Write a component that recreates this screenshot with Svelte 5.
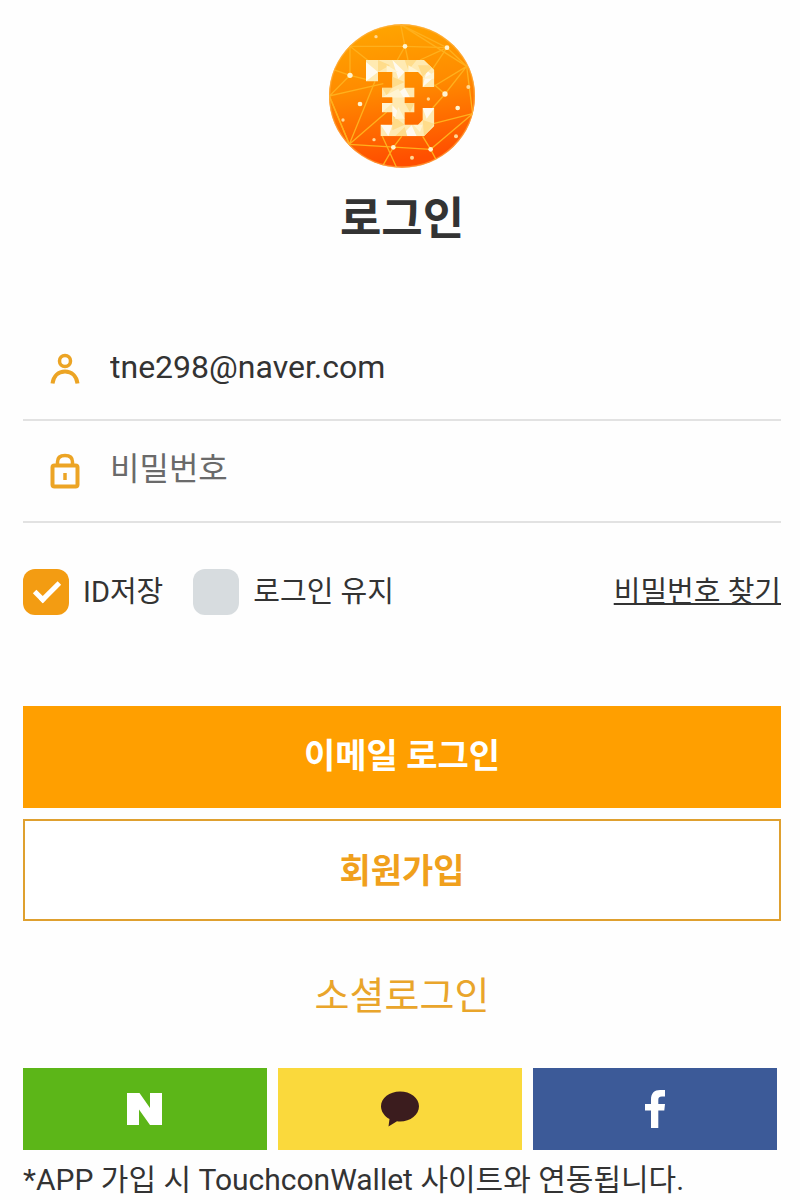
<script>
	let userId = "tne298@naver.com";
	let password = "";
	let saveId = true;
	let keepLogin = false;

	async function handleLogin() {
		const result = await fetch('/account/sign-in', {
			method: 'POST',
			headers: {
				'Content-Type': 'application/json',
			},
			body: JSON.stringify({
				user_id: userId,
				password,
				keep_login: keepLogin,
			}),
		})

		if (result.ok) {
			if (saveId) localStorage.setItem('userId', userId);
			window.location.href = '/';
		}
	}

	function handleSignUp() {
		window.location.href = '/sign-up';
	}

	function handleSocial(provider) {
		window.location.href = `/oauth/${provider}`;
	}
</script>

<main class="page">
	<header>
		<svg class="logo" viewBox="27 27 438 430" aria-hidden="true">
			<defs>
				<linearGradient id="coin" x1="0" y1="0" x2="0.15" y2="1">
					<stop offset="0" stop-color="#ffa800" />
					<stop offset="0.5" stop-color="#ff8a00" />
					<stop offset="1" stop-color="#ff4f00" />
				</linearGradient>
				<clipPath id="coinClip">
					<ellipse cx="246" cy="242" rx="219" ry="215" />
				</clipPath>
				<clipPath id="markClip">
					<path d="M138 134H312L343 164V215H308V184L294 170H254V217H283V246H254V263H283V291H254V328H294L308 314V278H343V332L312 363H182V328H217V291H186V263H217V246H186V217H217V170H174V198H138Z" />
				</clipPath>
			</defs>
			<ellipse cx="246" cy="242" rx="219" ry="215" fill="url(#coin)" />
			<g clip-path="url(#coinClip)" fill="none" stroke="#ffb01c" stroke-width="4">
				<path d="M90 93H255L381 97L440 153L458 295L332 402L88 387L28 242" />
				<path d="M90 93L150 140M90 93V180L28 242L190 205M40 163L90 180L138 192" />
				<path d="M242 28L255 93L232 134M255 93L264 134M242 28L381 97L300 134M242 28L440 153" />
				<path d="M381 97L335 165M440 153L343 212M440 153L375 236L343 208M375 236L338 278M458 295L340 325" />
				<path d="M165 198L88 387L200 290M28 242L88 387" />
				<path d="M187 363L230 457M245 363L220 396L185 457M308 363L332 402L352 440" />
			</g>
			<ellipse cx="246" cy="242" rx="217" ry="213" fill="none" stroke="#ffb347" stroke-width="4" opacity="0.6" />
			<g clip-path="url(#markClip)">
				<path d="M130 130H350V370H130Z" fill="#ffeab2" />
				<path d="M138 140L174 170L138 198ZM217 134L254 170L235 190ZM182 328L217 330L205 363ZM254 217L270 246L217 246ZM217 270L245 300L217 320ZM260 345L275 330L290 363H250ZM308 278L343 278L320 310ZM320 165L343 184L308 215Z" fill="#fffaf0" />
				<path d="M174 134L210 150L174 170ZM254 134L290 134L265 165ZM294 150L343 150L308 184ZM217 184L254 200L217 217ZM186 217L217 217L200 240ZM254 263L283 263L270 291ZM217 300L254 328L217 345ZM308 314L343 325L312 363ZM225 363L254 335L262 363Z" fill="#ffdc8a" />
				<path d="M200 150L235 170H200ZM265 150L300 170H265ZM186 246L235 220L250 246ZM186 263L217 263L186 291ZM235 275L254 310L225 310ZM280 328L308 328L300 350ZM308 190L343 170V190Z" fill="#fff4d2" />
			</g>
			<g fill="#fff4d0">
				<circle cx="255" cy="93" r="7" />
				<circle cx="381" cy="97" r="7" />
				<circle cx="90" cy="180" r="8" />
				<circle cx="375" cy="236" r="8" />
				<circle cx="120" cy="266" r="7" />
				<circle cx="413" cy="278" r="7" />
				<circle cx="220" cy="396" r="7" />
				<circle cx="332" cy="402" r="7" />
			</g>
			<g fill="#ffd894">
				<circle cx="168" cy="64" r="5" />
				<circle cx="445" cy="215" r="6" />
				<circle cx="325" cy="251" r="5" />
				<circle cx="69" cy="314" r="5" />
				<circle cx="162" cy="373" r="5" />
				<circle cx="408" cy="363" r="6" />
				<circle cx="276" cy="427" r="6" />
			</g>
		</svg>
		<h1>로그인</h1>
	</header>

	<form on:submit|preventDefault={handleLogin}>
		<div class="field">
			<label for="userId" aria-label="ID">
				<svg width="30" height="36" viewBox="0 0 30 36" fill="none" stroke="#eca424" stroke-width="4">
					<circle cx="15" cy="10" r="5.5" stroke-width="3.5" />
					<path d="M2.500 32.500C3.500 25 8.500 20.500 15 20.500S26.500 25 27.500 32.500" />
				</svg>
			</label>
			<input type="text" id="userId" bind:value={userId} />
		</div>
		<div class="field">
			<label for="password" aria-label="비밀번호">
				<svg width="30" height="36" viewBox="0 0 30 36" fill="none" stroke="#eca424" stroke-width="4">
					<rect x="2.500" y="12.500" width="25" height="21" rx="2" />
					<path d="M7.500 12V9C7.500 4.500 10.500 2.500 15 2.500S22.500 4.500 22.500 9V12" stroke-width="3.5" />
					<path d="M15 20V27" stroke-width="3.5" />
				</svg>
			</label>
			<input type="password" id="password" placeholder="비밀번호" bind:value={password} />
		</div>

		<div class="options">
			<label class="check"><input type="checkbox" bind:checked={saveId} />ID저장</label>
			<label class="check"><input type="checkbox" bind:checked={keepLogin} />로그인 유지</label>
			<a href="/find-password">비밀번호 찾기</a>
		</div>

		<div class="buttons">
			<button type="submit" class="login-button">이메일 로그인</button>
			<button type="button" class="signup-button" on:click={handleSignUp}>회원가입</button>
		</div>
	</form>

	<h2>소셜로그인</h2>
	<div class="social">
		<button type="button" class="naver" aria-label="Naver" on:click={() => handleSocial('naver')}>
			<svg width="36" height="32" viewBox="0 0 36 32">
				<path d="M0 0H12.500L23 15V0H35V32H23L12 16.500V32H0Z" fill="#fff" />
			</svg>
		</button>
		<button type="button" class="kakao" aria-label="Kakao" on:click={() => handleSocial('kakao')}>
			<svg width="38" height="36" viewBox="0 0 38 36">
				<path d="M19 0.500C8.500 0.500 0 7 0 15.300C0 20.500 3.500 25.500 8.500 28L7.500 35.500L16 30.200C17 30.400 18 30.500 19 30.500C29.500 30.500 38 23.800 38 15.300S29.500 0.500 19 0.500Z" fill="#3b1c1e" />
			</svg>
		</button>
		<button type="button" class="facebook" aria-label="Facebook" on:click={() => handleSocial('facebook')}>
			<svg width="20" height="38" viewBox="0 0 20 38">
				<path d="M6 38V20.500H0V14H6V9.500C6 3 9.500 0 15 0H20.500V6.500H17C14 6.500 13.300 7.800 13.300 10V14H20L19.300 20.500H13.300V38Z" fill="#fff" />
			</svg>
		</button>
	</div>
	<p class="notice">*APP 가입 시 TouchconWallet 사이트와 연동됩니다.</p>
</main>

<style>
:global(body) {
	background: #fefefe;
}

.page {
	padding: 24px 19px 0 23px;
	font-family: Roboto, "Noto Sans CJK KR", sans-serif;
	font-size: 30px;
	line-height: 40px;
	color: #333;
}

header {
	display: flex;
	flex-direction: column;
	align-items: center;
	gap: 22px;
	margin-bottom: 69px;
}

.logo {
	width: 146px;
	height: 144px;
}

h1 {
	margin: 0;
	font-size: 45px;
	font-weight: 700;
	line-height: 60px;
}

.field {
	display: flex;
	align-items: center;
	gap: 30px;
	height: 100px;
	padding-left: 27px;
	border-bottom: 2px solid #e2e2e2;
}

.field svg {
	display: block;
}

.field input {
	flex: 1;
	min-width: 0;
	padding: 0 0 4px;
	border: 0;
	outline: none;
	background: none;
	font-family: inherit;
	font-size: 32px;
	line-height: 48px;
	color: #333;
}

.field input::placeholder {
	color: #6a6a6a;
}

.options {
	display: flex;
	align-items: center;
	gap: 30px;
	margin: 46px 0 91px;
	font-size: 29px;
}

.options a {
	margin-left: auto;
	color: #333;
	text-decoration: underline;
	text-decoration-thickness: 2px;
}

.check {
	display: flex;
	align-items: center;
	gap: 14px;
}

.check input {
	display: grid;
	place-items: center;
	width: 46px;
	height: 46px;
	margin: 0;
	border-radius: 12px;
	background: #d7dcdf;
	appearance: none;
}

.check input:checked {
	background: #f39c12;
}

.check input:checked::before {
	content: "";
	width: 26px;
	height: 14px;
	margin: 0 0 6px 2px;
	border-left: 5px solid #fff;
	border-bottom: 5px solid #fff;
	box-sizing: border-box;
	transform: rotate(-45deg);
}

.buttons {
	display: flex;
	flex-direction: column;
	gap: 11px;
}

button {
	padding: 0;
	border: 0;
	font-family: inherit;
	cursor: pointer;
}

.buttons button {
	height: 102px;
	padding-bottom: 4px;
	border: 2px solid #dfa02f;
	font-size: 34px;
	font-weight: 700;
}

.buttons .login-button {
	padding-bottom: 8px;
	border-color: #ff9f00;
	background: #ff9f00;
	color: #fff;
}

.signup-button {
	background: #fff;
	color: #f0a01c;
}

h2 {
	margin: 48px 0 44px;
	font-size: 38px;
	font-weight: 400;
	line-height: 55px;
	text-align: center;
	color: #e9a52b;
}

.social {
	display: flex;
	gap: 11px;
	padding-right: 4px;
}

.social button {
	display: flex;
	flex: 1;
	align-items: center;
	justify-content: center;
	height: 82px;
}

.naver {
	background: #5cb618;
}

.kakao {
	background: #fad93c;
}

.facebook {
	background: #3c5a98;
}

.notice {
	margin: 10px 0 0;
}
</style>
